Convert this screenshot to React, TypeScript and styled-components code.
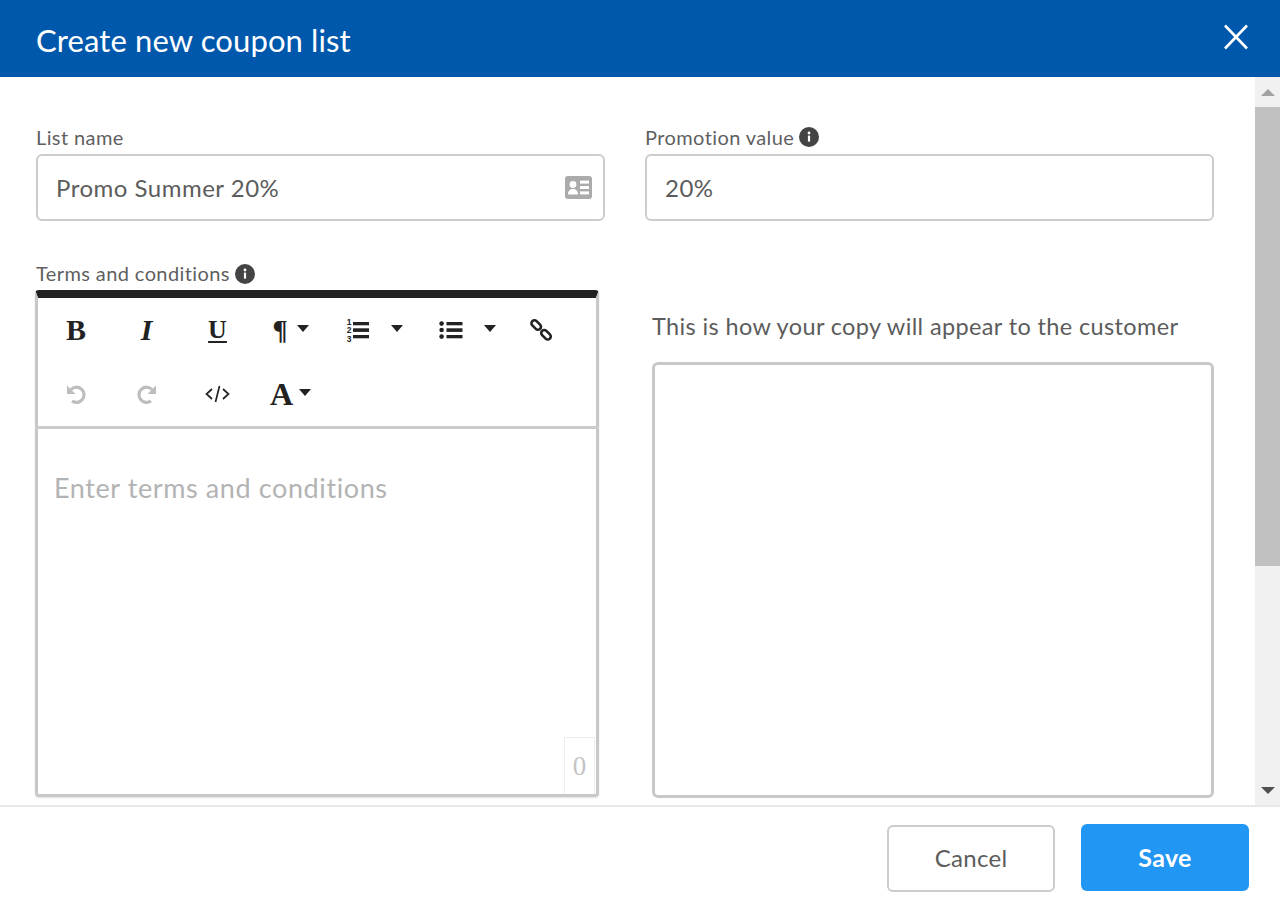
import React from "react";
import styled, { createGlobalStyle } from "styled-components";

const Global = createGlobalStyle`
  html, body { margin: 0; padding: 0; background: #fff; }
  body { font-family: Lato, "Open Sans", sans-serif; color: #555; overflow: hidden; }
  * { box-sizing: border-box; }
`;
const Page = styled.div`
  width: 1280px; height: 905px; display: flex; flex-direction: column; background: #fff;
`;
const Header = styled.header`
  height: 77px; flex: none; background: #0058ac; color: #fff; display: flex;
  align-items: center; justify-content: space-between; padding: 0 31px 0 36px;
`;
const Title = styled.h1`
  margin: 2px 0 0; font-size: 31px; font-weight: 400; letter-spacing: 0.12px;
`;
const CloseButton = styled.button`
  width: 26px; height: 26px; padding: 0; border: 0; background: none; display: flex; margin-top: -3px;
`;
const Main = styled.div`
  height: 728px; flex: none; display: flex;
`;
const Content = styled.div`
  flex: 1; min-width: 0; padding: 48px 41px 0 36px; display: flex; flex-direction: column; overflow: hidden;
`;
const Row = styled.div`
  display: flex; gap: 40px;
`;
const Field = styled.div`
  width: 569px; display: flex; flex-direction: column;
`;
const Label = styled.label`
  height: 29px; font-size: 20px; line-height: 24px; color: #5f5f5f; letter-spacing: 0.4px;
  display: flex; align-items: flex-start; gap: 5px;
`;
const InfoIcon = styled.svg`
  width: 20px; height: 20px; margin-top: 2px; flex: none;
`;
const InputBox = styled.div`
  height: 67px; border: 2px solid #ccc; border-radius: 6px; padding: 0 11px 0 18px;
  display: flex; align-items: center; justify-content: space-between;
  font-size: 24px; color: #5c5c5c; letter-spacing: 0.5px;
`;
const LowerRow = styled.div`
  display: flex; margin-top: 44px; gap: 54px;
`;
const EditorColumn = styled.div`
  width: 562px; flex: none; display: flex; flex-direction: column;
`;
const EditorLabel = styled(Label)`
  height: 16px; line-height: 16px; margin-bottom: 9px; align-items: center;
`;
const Editor = styled.div`
  height: 507px; margin: 0 -1px; border: 3px solid #c8c8c8; border-top: 8px solid #222; border-bottom-width: 3px;
  border-radius: 4px; box-shadow: 0 1px 2px rgba(0,0,0,.12); position: relative;
  display: flex; flex-direction: column;
`;
const Toolbar = styled.div`
  height: 131px; flex: none; border-bottom: 3px solid #ccc; margin: 0 -3px; padding: 0 0 0 6px;
`;
const ToolRow = styled.div`
  height: 64px; display: flex; align-items: center;
`;
const Tool = styled.button<{ $w: number }>`
  width: ${p => p.$w}px; height: 64px; flex: none; border: 0; background: none; padding: 0;
  display: flex; align-items: center; justify-content: center; color: #222;
`;
const Glyph = styled.span<{ $style?: string; $u?: boolean; $size?: number }>`
  font-family: "Liberation Serif", serif; font-weight: 700; font-size: ${p => p.$size ?? 30}px; line-height: 1;
  font-style: ${p => p.$style ?? "normal"}; text-decoration: ${p => (p.$u ? "underline" : "none")};
  text-underline-offset: 3px; text-decoration-thickness: 2px;
`;
const Caret = styled.span<{ $gap: number }>`
  width: 0; height: 0; margin-left: ${p => p.$gap}px;
  border-left: 6.5px solid transparent; border-right: 6.5px solid transparent; border-top: 7px solid #222;
  margin-top: -3px;
`;
const HistoryIcon = styled.svg<{ $flip?: boolean }>`
  width: 21px; height: 21px; ${p => (p.$flip ? "transform: scaleX(-1);" : "")}
`;
const ListSvg = styled.svg`
  width: 24px; height: 27px; overflow: visible;
`;
const Placeholder = styled.div`
  padding: 42px 0 0 16px; font-size: 27px; line-height: 34px; color: #b3b3b3; letter-spacing: 0.6px;
`;
const Counter = styled.div`
  position: absolute; right: 1px; bottom: 0; width: 31px; height: 57px; border: 1px solid #eee;
  border-bottom: 0; font-family: "Liberation Serif", serif; font-size: 27px; color: #c4c4c4;
  display: flex; align-items: center; justify-content: center;
`;
const PreviewColumn = styled.div`
  width: 562px; flex: none; display: flex; flex-direction: column;
`;
const PreviewHint = styled.div`
  height: 97px; padding-top: 46px; font-size: 23.5px; line-height: 30px; color: #5c5c5c; letter-spacing: 0.37px;
`;
const PreviewBox = styled.div`
  height: 436px; border: 3px solid #c8c8c8; border-radius: 6px;
`;
const Scrollbar = styled.div`
  width: 25px; flex: none; background: #f1f1f1; display: flex; flex-direction: column;
`;
const ScrollButton = styled.div<{ $h: number }>`
  height: ${p => p.$h}px; flex: none; display: flex; align-items: center; justify-content: center;
`;
const Arrow = styled.span<{ $down?: boolean }>`
  width: 0; height: 0; border-left: 7px solid transparent; border-right: 7px solid transparent;
  ${p => (p.$down ? "border-top: 7px solid #505050;" : "border-bottom: 7px solid #a3a3a3;")}
`;
const Thumb = styled.div`
  height: 459px; flex: none; background: #c1c1c1;
`;
const Spacer = styled.div`
  flex: 1;
`;
const Footer = styled.footer`
  flex: 1; border-top: 2px solid #e8e8e8; display: flex; align-items: flex-start; justify-content: flex-end;
  padding: 17px 31px 0 0; gap: 26px;
`;
const CancelButton = styled.button`
  width: 168px; height: 67px; margin-top: 1px; padding: 0 0 3px; background: #fff; border: 2px solid #ccc; border-radius: 6px;
  font-family: inherit; font-size: 24px; color: #5c5c5c; letter-spacing: 0.3px;
`;
const SaveButton = styled.button`
  width: 168px; height: 67px; padding: 0 0 2px; background: #2196f3; border: 0; border-radius: 6px;
  font-family: inherit; font-size: 25px; font-weight: 700; color: #fff; letter-spacing: 0.3px;
`;

const Info = () => (
  <InfoIcon viewBox="0 0 20 20">
    <circle cx="10" cy="10" r="10" fill="#444" />
    <rect x="8.9" y="8.6" width="2.2" height="6" fill="#fff" />
    <circle cx="10" cy="6" r="1.4" fill="#fff" />
  </InfoIcon>
);

const CardIcon = () => (
  <svg width="27" height="23" viewBox="0 0 27 23">
    <rect width="27" height="23" rx="3" fill="#ababab" />
    <circle cx="8" cy="8.5" r="3.4" fill="#fff" />
    <path d="M3 18.5c0-3.8 2-5.6 5-5.6s5 1.8 5 5.6z" fill="#fff" />
    <rect x="15" y="4.6" width="9" height="3" fill="#fff" />
    <rect x="15" y="10" width="9" height="3" fill="#fff" />
    <rect x="15" y="15.4" width="9" height="3" fill="#fff" />
  </svg>
);

const LinkIcon = () => (
  <svg width="24" height="24" viewBox="0 0 24 24" fill="none" stroke="#222" strokeWidth="2.6">
    <rect x="1.7" y="4" width="11" height="6" rx="3" transform="rotate(45 7.2 7)" />
    <rect x="11.5" y="13.7" width="11" height="6" rx="3" transform="rotate(45 17 16.7)" />
  </svg>
);

const Bars = ({ x }: { x: number }) => (
  <>
    <rect x={x} y="3" width="16" height="3.3" />
    <rect x={x} y="9.3" width="16" height="3.6" />
    <rect x={x} y="16" width="16" height="3.3" />
  </>
);

const OrderedIcon = () => (
  <ListSvg viewBox="0 -2 24 27" fill="#222">
    <Bars x={7} />
    <g fontFamily="Liberation Sans, sans-serif" fontWeight="700" fontSize="8.5" textAnchor="middle">
      <text x="3" y="6.3">1</text>
      <text x="3" y="14.3">2</text>
      <text x="3" y="22.5">3</text>
    </g>
  </ListSvg>
);

const BulletIcon = () => (
  <ListSvg viewBox="0 -2 24 27" fill="#222">
    <Bars x={7.5} />
    <circle cx="2.6" cy="4.6" r="2.3" />
    <circle cx="2.6" cy="11" r="2.3" />
    <circle cx="2.6" cy="17.6" r="2.3" />
  </ListSvg>
);

const History = ({ flip }: { flip?: boolean }) => (
  <HistoryIcon $flip={flip} viewBox="0 0 21 21">
    <path d="M5 5.5A7.6 7.6 0 1 1 6 17" fill="none" stroke="#bdbdbd" strokeWidth="3.2" />
    <path d="M1 1.5v8.5h8.5z" fill="#bdbdbd" />
  </HistoryIcon>
);

const CodeIcon = () => (
  <svg width="25" height="18" viewBox="0 0 25 18" fill="none" stroke="#222" strokeWidth="1.7">
    <path d="M7 4l-5.5 5L7 14M18 4l5.5 5L18 14M14.5 1l-4 16" />
  </svg>
);

const CloseIcon = () => (
  <svg width="26" height="26" viewBox="0 0 26 26" stroke="#fff" strokeWidth="2.6">
    <path d="M2 1.5l22 23M24 1.5l-22 23" />
  </svg>
);

export default function App() {
  return (
    <Page>
      <Global />
      <Header>
        <Title>Create new coupon list</Title>
        <CloseButton aria-label="Close"><CloseIcon /></CloseButton>
      </Header>
      <Main>
        <Content>
          <Row>
            <Field>
              <Label>List name</Label>
              <InputBox>Promo Summer 20%<CardIcon /></InputBox>
            </Field>
            <Field>
              <Label>Promotion value <Info /></Label>
              <InputBox>20%</InputBox>
            </Field>
          </Row>
          <LowerRow>
            <EditorColumn>
              <EditorLabel>Terms and conditions <Info /></EditorLabel>
              <Editor>
                <Toolbar>
                  <ToolRow>
                    <Tool $w={70}><Glyph>B</Glyph></Tool>
                    <Tool $w={71}><Glyph $style="italic">I</Glyph></Tool>
                    <Tool $w={71}><Glyph $u $size={26}>U</Glyph></Tool>
                    <Tool $w={75}><Glyph $size={28}>¶</Glyph><Caret $gap={9} /></Tool>
                    <Tool $w={93}><OrderedIcon /><Caret $gap={21} /></Tool>
                    <Tool $w={93}><BulletIcon /><Caret $gap={21} /></Tool>
                    <Tool $w={54}><LinkIcon /></Tool>
                  </ToolRow>
                  <ToolRow>
                    <Tool $w={70}><History /></Tool>
                    <Tool $w={71}><History flip /></Tool>
                    <Tool $w={71}><CodeIcon /></Tool>
                    <Tool $w={75}><Glyph $size={32}>A</Glyph><Caret $gap={6} /></Tool>
                  </ToolRow>
                </Toolbar>
                <Placeholder>Enter terms and conditions</Placeholder>
                <Counter>0</Counter>
              </Editor>
            </EditorColumn>
            <PreviewColumn>
              <PreviewHint>This is how your copy will appear to the customer</PreviewHint>
              <PreviewBox />
            </PreviewColumn>
          </LowerRow>
        </Content>
        <Scrollbar>
          <ScrollButton $h={30}><Arrow /></ScrollButton>
          <Thumb />
          <Spacer />
          <ScrollButton $h={30}><Arrow $down /></ScrollButton>
        </Scrollbar>
      </Main>
      <Footer>
        <CancelButton>Cancel</CancelButton>
        <SaveButton>Save</SaveButton>
      </Footer>
    </Page>
  );
}
